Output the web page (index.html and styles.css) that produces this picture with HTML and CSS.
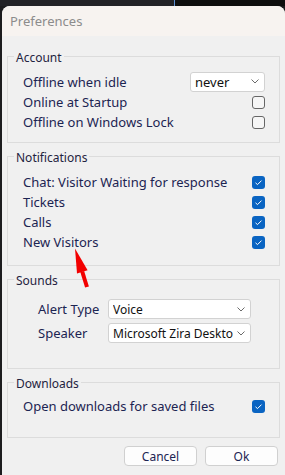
FILE: index.html
```html
<!DOCTYPE html>
<html lang="en">
<head>
    <meta charset="UTF-8">
    <meta name="viewport" content="width=device-width, initial-scale=1.0">
    <title>Preferences</title>
    <link rel="stylesheet" href="styles.css">
</head>
<body>
    <div class="topbar">
        <div class="topbar-left"></div>
        <div class="topbar-line"></div>
        <div class="topbar-right"></div>
    </div>
    <div class="window">
        <div class="titlebar">Preferences</div>
        <div class="content">
            <fieldset class="group group-account">
                <legend>Account</legend>
                <div class="row row-first">
                    <span>Offline when idle</span>
                    <div class="select select-small">
                        <span class="select-text">never</span>
                        <svg class="chevron" width="8" height="5" viewBox="0 0 8 5"><path d="M0.5 0.5 L4 4 L7.5 0.5" fill="none" stroke="#6b6b6b" stroke-width="1"/></svg>
                    </div>
                </div>
                <div class="row">
                    <span>Online at Startup</span>
                    <span class="check"></span>
                </div>
                <div class="row">
                    <span>Offline on Windows Lock</span>
                    <span class="check"></span>
                </div>
            </fieldset>

            <fieldset class="group group-notify">
                <legend>Notifications</legend>
                <div class="row">
                    <span>Chat: Visitor Waiting for response</span>
                    <span class="check checked"><svg width="13" height="13" viewBox="0 0 13 13"><path d="M3.5 6.8 L5.5 8.6 L9.5 4.6" fill="none" stroke="#fff" stroke-width="1"/></svg></span>
                </div>
                <div class="row">
                    <span>Tickets</span>
                    <span class="check checked"><svg width="13" height="13" viewBox="0 0 13 13"><path d="M3.5 6.8 L5.5 8.6 L9.5 4.6" fill="none" stroke="#fff" stroke-width="1"/></svg></span>
                </div>
                <div class="row">
                    <span>Calls</span>
                    <span class="check checked"><svg width="13" height="13" viewBox="0 0 13 13"><path d="M3.5 6.8 L5.5 8.6 L9.5 4.6" fill="none" stroke="#fff" stroke-width="1"/></svg></span>
                </div>
                <div class="row">
                    <span>New Visitors</span>
                    <span class="check checked"><svg width="13" height="13" viewBox="0 0 13 13"><path d="M3.5 6.8 L5.5 8.6 L9.5 4.6" fill="none" stroke="#fff" stroke-width="1"/></svg></span>
                </div>
            </fieldset>

            <fieldset class="group group-sounds">
                <legend>Sounds</legend>
                <div class="sound-grid">
                    <span class="sound-label">Alert Type</span>
                    <div class="select">
                        <span class="select-text">Voice</span>
                        <svg class="chevron" width="8" height="5" viewBox="0 0 8 5"><path d="M0.5 0.5 L4 4 L7.5 0.5" fill="none" stroke="#6b6b6b" stroke-width="1"/></svg>
                    </div>
                    <span class="sound-label">Speaker</span>
                    <div class="select">
                        <span class="select-text">Microsoft Zira Desktop</span>
                        <svg class="chevron" width="8" height="5" viewBox="0 0 8 5"><path d="M0.5 0.5 L4 4 L7.5 0.5" fill="none" stroke="#6b6b6b" stroke-width="1"/></svg>
                    </div>
                </div>
            </fieldset>

            <fieldset class="group group-downloads">
                <legend>Downloads</legend>
                <div class="row">
                    <span>Open downloads for saved files</span>
                    <span class="check checked"><svg width="13" height="13" viewBox="0 0 13 13"><path d="M3.5 6.8 L5.5 8.6 L9.5 4.6" fill="none" stroke="#fff" stroke-width="1"/></svg></span>
                </div>
            </fieldset>

            <div class="buttons">
                <button class="btn">Cancel</button>
                <button class="btn">Ok</button>
            </div>
        </div>
    </div>

    <!-- annotation arrow drawn over the dialog -->
    <svg class="arrow" width="30" height="45" viewBox="70 245 30 45">
        <polygon points="75,248.5 87.6,270.2 77,273.6" fill="#f20000"/>
        <line x1="82.2" y1="271.5" x2="87" y2="287" stroke="#f20000" stroke-width="4"/>
    </svg>
</body>
</html>
```

FILE: styles.css
```css
* {
    box-sizing: border-box;
}
body {
    margin: 0;
    width: 285px;
    height: 475px;
    overflow: hidden;
    position: relative;
    background-color: #1c1c1e;
    font-family: "Noto Sans", "Open Sans", sans-serif;
}
.topbar {
    display: flex;
    height: 6px;
}
.topbar-left {
    width: 174px;
    background-color: #222226;
}
.topbar-line {
    width: 1px;
    background-color: #5b8fd2;
}
.topbar-right {
    flex: 1;
    background-color: #0e0e0e;
}
.window {
    margin-left: 2px;
    height: 469px;
    background-color: #f0f0f0;
    border-radius: 8px 8px 0 0;
    overflow: hidden;
}
.titlebar {
    height: 30px;
    display: flex;
    align-items: center;
    padding-left: 8px;
    background-color: #f7f3f0;
    color: #8c8c8c;
    font-size: 13px;
}
.content {
    padding: 11px 5px 0 5px;
}
.group {
    margin: 0 0 4px 0;
    padding: 0 14px 0 6px;
    border: 1px solid #dcdcdc;
}
.group legend {
    padding: 4px 2px 0;
    font-size: 12px;
    line-height: 14px;
    color: #1f2340;
}
.group-account {
    padding-top: 6px;
    padding-bottom: 10px;
}
.group-notify {
    padding-top: 7px;
    padding-bottom: 13px;
}
.group-sounds {
    padding-top: 11px;
    padding-bottom: 25px;
}
.group-downloads {
    padding-top: 5px;
    padding-bottom: 21px;
}
.row {
    display: flex;
    justify-content: space-between;
    align-items: center;
    height: 20px;
    padding-left: 9px;
    font-size: 13px;
    color: #1c2452;
}
.row-first {
    height: 21px;
}
.check {
    width: 13px;
    height: 13px;
    border: 1px solid #666;
    border-radius: 3px;
    background-color: #f6f6f6;
}
.check.checked {
    border: none;
    background-color: #0a64c2;
}
.check svg {
    display: block;
}
.select {
    display: flex;
    align-items: center;
    height: 20px;
    padding: 0 5px 0 4px;
    background-color: #fff;
    border: 1px solid #d2d2d2;
    border-radius: 3px;
    font-size: 12px;
    color: #111;
}
.select-small {
    width: 75px;
    font-size: 13px;
}
.select-text {
    flex: 1;
    overflow: hidden;
    white-space: nowrap;
}
.chevron {
    margin-left: 4px;
    flex-shrink: 0;
}
.sound-grid {
    display: grid;
    grid-template-columns: 70px 143px;
    grid-auto-rows: 20px;
    row-gap: 4px;
    align-items: center;
    padding-left: 24px;
}
.sound-label {
    font-size: 13px;
    color: #1c2452;
}
.buttons {
    display: flex;
    justify-content: flex-end;
    gap: 8px;
    margin-top: 8px;
    padding-right: 2px;
}
.btn {
    width: 73px;
    height: 20px;
    padding: 0;
    background-color: #fdfdfd;
    border: 1px solid #d0d0d0;
    border-radius: 4px;
    font-family: "Noto Sans", "Open Sans", sans-serif;
    font-size: 12px;
    color: #1c2452;
}
.arrow {
    position: absolute;
    left: 70px;
    top: 245px;
}
```
